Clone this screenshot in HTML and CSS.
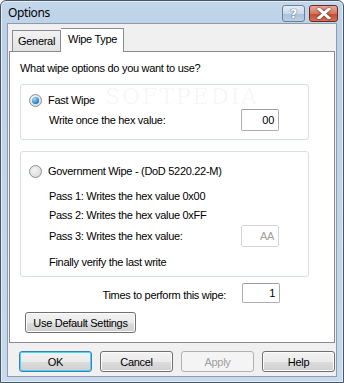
FILE: index.html
```html
<!DOCTYPE html>
<html lang="en">
<head>
  <meta charset="UTF-8" />
  <title>Options</title>
  <link rel="stylesheet" href="styles.css">
</head>
<body>

  <div class="window">
    <div class="titlebar">
      <span class="title">Options</span>
      <div class="caption-btns">
        <span class="cap help">?</span>
        <span class="cap close">
          <svg width="14" height="11" viewBox="0 0 14 11"><path d="M2 1 L12 10 M12 1 L2 10" stroke="#fff" stroke-width="3" stroke-linecap="square"/></svg>
        </span>
      </div>
    </div>

    <div class="client">
      <div class="tabs">
        <div class="tab">General</div>
        <div class="tab active">Wipe Type</div>
      </div>

      <div class="panel">
        <p class="question">What wipe options do you want to use?</p>

        <div class="group group-fast">
          <label class="radio-row"><span class="radio checked"></span>Fast Wipe</label>
          <div class="field-row">
            <span>Write once the hex value:</span>
            <span class="input">00</span>
          </div>
        </div>

        <div class="group group-gov">
          <label class="radio-row"><span class="radio"></span>Government Wipe - (DoD 5220.22-M)</label>
          <div class="line pass1">Pass 1: Writes the hex value 0x00</div>
          <div class="line pass2">Pass 2: Writes the hex value 0xFF</div>
          <div class="field-row pass3">
            <span>Pass 3: Writes the hex value:</span>
            <span class="input disabled">AA</span>
          </div>
          <div class="line final">Finally verify the last write</div>
        </div>

        <div class="times-row">
          <span>Times to perform this wipe:</span>
          <span class="input">1</span>
        </div>

        <button class="btn default-settings">Use Default Settings</button>

        <div class="watermark">SOFTPEDIA</div>
      </div>

      <div class="actions">
        <button class="btn primary">OK</button>
        <button class="btn">Cancel</button>
        <button class="btn" disabled>Apply</button>
        <button class="btn">Help</button>
      </div>
    </div>
  </div>

</body>
</html>
```

FILE: styles.css
```css
* { margin: 0; padding: 0; box-sizing: border-box; }

body {
  font-family: 'Liberation Sans', Arial, sans-serif;
  font-size: 11px;
  letter-spacing: -0.3px;
  color: #000;
  background: #fff;
  width: 344px;
  height: 383px;
  overflow: hidden;
}

.window {
  width: 344px;
  height: 383px;
  border: 1px solid #4a5563;
  border-radius: 6px 6px 0 0;
  background: linear-gradient(#c3d6ea, #bcd1e8 30px, #c6d9ee);
  padding: 0 6px 5px 6px;
  display: flex;
  flex-direction: column;
  box-shadow: inset 0 0 0 1px #e4eef8;
}

/* title bar */
.titlebar {
  height: 22px;
  display: flex;
  align-items: center;
  justify-content: space-between;
}

.title {
  font-family: 'Noto Sans', sans-serif;
  font-size: 12px;
  letter-spacing: -0.4px;
  color: #000;
  padding-left: 1px;
  margin-top: 1px;
}

.caption-btns {
  display: flex;
  gap: 4px;
  margin-top: 2px;
  margin-right: -1px;
}

.cap {
  height: 17px;
  border: 1px solid #6d7f93;
  border-radius: 3px;
  display: flex;
  align-items: center;
  justify-content: center;
}

.cap.help {
  width: 23px;
  background: linear-gradient(#e3ecf6, #c9d9ea 50%, #a9c1dc 51%, #b9cfe6);
  color: #fff;
  font-family: 'DejaVu Sans', sans-serif;
  font-weight: bold;
  font-size: 13px;
  text-shadow: 0 0 1px #34506e, 0 0 1px #34506e;
}

.cap.close {
  width: 29px;
  border-color: #6b2a22;
  background: linear-gradient(#e9aa9d, #d6755e 50%, #c24a31 51%, #d2745a);
}

.cap.close svg { filter: drop-shadow(0 0 1px #5a1a10); }

/* client area */
.client {
  flex: 1;
  background: #f0f0f0;
  border: 1px solid #8d9cab;
  display: flex;
  flex-direction: column;
  padding: 3px 1px 0 1px;
}

.tabs {
  display: flex;
  align-items: flex-end;
  height: 24px;
  padding-left: 3px;
  position: relative;
  z-index: 1;
}

.tab {
  height: 21px;
  padding: 4px 5px 0 5px;
  border: 1px solid #898c95;
  border-bottom: none;
  background: linear-gradient(#f2f2f2, #e3e3e3);
}

.tab.active {
  height: 24px;
  background: #fff;
  border-left: none;
  padding: 4px 6px 0 7px;
  margin-bottom: -1px;
}

.panel {
  position: relative;
  height: 292px;
  background: #fff;
  border: 1px solid #898c95;
  padding: 10px 0 0 10px;
}

.question { line-height: 13px; }

.group {
  width: 289px;
  border: 1px solid #d5dfe5;
  border-radius: 3px;
  padding-left: 8px;
}

.group-fast {
  height: 56px;
  margin-top: 9px;
  padding-top: 9px;
}

.group-gov {
  height: 126px;
  margin-top: 11px;
  padding-top: 13px;
}

.radio-row {
  display: flex;
  align-items: center;
  gap: 6px;
  height: 13px;
  line-height: 13px;
}

.radio {
  width: 13px;
  height: 13px;
  border-radius: 50%;
  border: 1px solid #8e8f8f;
  background: radial-gradient(circle at 40% 35%, #f4f4f4, #d4d4d4);
  position: relative;
}

.radio.checked::after {
  content: '';
  position: absolute;
  left: 2px; top: 2px;
  width: 7px; height: 7px;
  border-radius: 50%;
  background: radial-gradient(circle at 35% 30%, #9fdcff, #1f7fc8 70%, #135a9a);
}

.field-row {
  display: flex;
  align-items: center;
  justify-content: space-between;
  width: 250px;
  padding-left: 20px;
}

.group-fast .field-row { margin-top: 2px; }

.input {
  width: 38px;
  height: 22px;
  border: 1px solid #abadb3;
  border-top-color: #9a9da3;
  background: #fff;
  border-radius: 2px;
  text-align: right;
  padding: 4px 4px 0 0;
  line-height: 13px;
}

.input.disabled {
  color: #a0a0a0;
  border-color: #d3d3d3;
}

.line {
  padding-left: 20px;
  line-height: 13px;
}

.pass1 { margin-top: 12px; }
.pass2 { margin-top: 6px; }
.pass3 { margin-top: 3px; }
.final { margin-top: 9px; }

.times-row {
  display: flex;
  align-items: center;
  justify-content: flex-end;
  gap: 16px;
  width: 260px;
  margin-top: 6px;
}

.times-row span:first-child { margin-top: 4px; }

.times-row .input { height: 20px; padding-top: 3px; }

.btn {
  font-family: 'Liberation Sans', Arial, sans-serif;
  font-size: 11px;
  letter-spacing: -0.3px;
  color: #000;
  height: 21px;
  border: 1px solid #707070;
  border-radius: 3px;
  background: linear-gradient(#f2f2f2, #ebebeb 50%, #dddddd 51%, #cfcfcf);
  box-shadow: inset 0 0 0 1px #fcfcfc;
}

.default-settings {
  width: 111px;
  margin: 9px 0 0 5px;
}

.actions {
  display: flex;
  gap: 8px;
  padding: 8px 0 0 10px;
}

.actions .btn { width: 73px; height: 21px; }

.btn.primary {
  border-color: #3c7fb1;
  box-shadow: inset 0 0 0 1px #48d4fb;
}

.btn:disabled {
  color: #a0a0a0;
  border-color: #adb2b5;
  background: #f4f4f4;
  box-shadow: none;
}

.watermark {
  position: absolute;
  left: 95px;
  top: 32px;
  font-family: 'DejaVu Serif', serif;
  font-size: 22px;
  letter-spacing: 2px;
  color: rgba(0, 0, 0, 0.05);
}
```
